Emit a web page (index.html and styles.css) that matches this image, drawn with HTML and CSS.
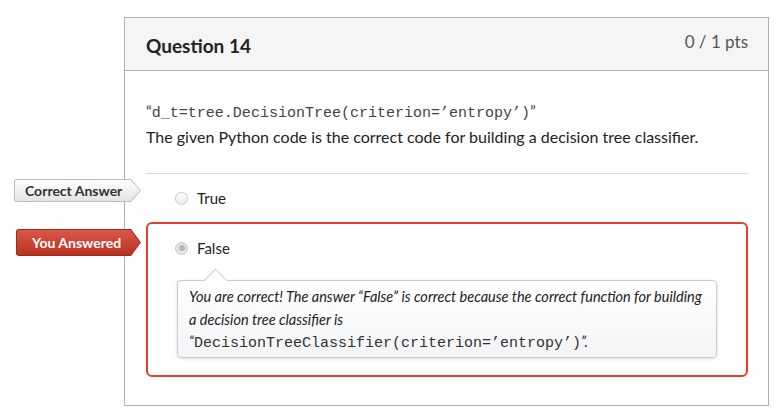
FILE: index.html
```html
<!DOCTYPE html>
<html>
<head>
<meta charset="utf-8">
<link rel="stylesheet" href="styles.css">
</head>
<body>
<div class="card">
  <div class="header">
    <h2 class="title">Question 14</h2>
    <div class="pts">0 / 1 pts</div>
  </div>
  <div class="body">
    <p class="code-line">“<code class="code-q">d_t=tree.DecisionTree(criterion=’entropy’)</code>”</p>
    <p class="desc">The given Python code is the correct code for building a decision tree classifier.</p>
    <div class="rule"></div>
    <div class="answer">
      <div class="label label-correct"><span class="label-in">Correct Answer</span></div>
      <div class="row"><span class="radio"></span><span class="opt">True</span></div>
    </div>
    <div class="answer answered">
      <div class="label label-you"><span class="label-in">You Answered</span></div>
      <div class="row"><span class="radio checked"></span><span class="opt">False</span></div>
      <div class="tip">
        You are correct! The answer “False” is correct because the correct function for building a decision tree classifier is “<code class="code-t">DecisionTreeClassifier(criterion=’entropy’)</code>”.
      </div>
    </div>
  </div>
</div>
</body>
</html>
```
FILE: styles.css
```css
html, body { margin: 0; padding: 0; background: #fff; }
body { font-family: Lato, "Open Sans", sans-serif; color: #222; }

.card {
  margin: 17px 0 0 124px;
  width: 645px;
  box-sizing: border-box;
  border: 1px solid #b0b0b0;
}
.header {
  height: 53px;
  box-sizing: border-box;
  background: #f5f5f5;
  border-bottom: 1px solid #b0b0b0;
  display: flex;
  justify-content: space-between;
  align-items: flex-start;
  padding: 0 20px 0 21px;
}
.title {
  margin: 0;
  padding-top: 17px;
  font-size: 19px;
  line-height: 22px;
  font-weight: 700;
  color: #222;
}
.pts {
  padding-top: 14px;
  font-size: 17px;
  line-height: 20px;
  color: #555;
}
.body { padding: 28px 20px 28px 21px; }
.code-line { margin: 0 0 2px; height: 24px; font-size: 16px; line-height: 24px; color: #444; }
.code-q { font-family: "Liberation Mono", "Courier New", monospace; font-size: 15px; line-height: 1; color: #444; }
.desc { margin: 0; height: 24px; font-size: 16px; line-height: 24px; color: #222; }
.rule { height: 1px; background: #dcdcdc; margin-top: 24px; }

.answer {
  position: relative;
  border: 2px solid transparent;
  border-radius: 6px;
  padding: 10px 0 10px 27px;
}
.answer.answered {
  border-color: #e5402a;
  padding: 12px 0 17px 27px;
}
.row { display: flex; align-items: center; height: 24px; font-size: 15px; color: #222; }
.radio {
  width: 11px; height: 11px;
  border-radius: 50%;
  border: 1px solid #c9c9c9;
  background: linear-gradient(#fdfdfd, #ececec);
  margin-right: 9px;
  position: relative;
}
.radio.checked { background: #e6e6e6; border-color: #c4c4c4; }
.radio.checked::after {
  content: "";
  position: absolute;
  left: 2.5px; top: 2.5px;
  width: 6px; height: 6px;
  border-radius: 50%;
  background: #b5b5b5;
}
.opt { font-size: 15px; }

.label {
  position: absolute;
  left: -134px;
  top: 3px;
  width: 127px;
  height: 23px;
  padding: 1px;
  box-sizing: border-box;
  background: #bdbdbd;
  border-radius: 3px 0 0 3px;
  clip-path: polygon(0 0, calc(100% - 10px) 0, 100% 50%, calc(100% - 10px) 100%, 0 100%);
}
.label-in {
  display: block;
  height: 100%;
  border-radius: 2px 0 0 2px;
  background: linear-gradient(#ffffff, #e4e4e4);
  clip-path: polygon(0 0, calc(100% - 9.5px) 0, 100% 50%, calc(100% - 9.5px) 100%, 0 100%);
  font-size: 14px;
  font-weight: 700;
  line-height: 21px;
  color: #333;
  padding-left: 10px;
}
.label-you {
  left: -132px;
  top: 5px;
  width: 125px;
  height: 27px;
  background: #a3271b;
}
.label-you .label-in {
  background: linear-gradient(#d9574a, #b8321f);
  color: #fff;
  line-height: 25px;
  padding-left: 15px;
}

.tip {
  position: relative;
  margin: 20px 0 0 2px;
  width: 540px;
  box-sizing: border-box;
  border: 1px solid #c9cdd2;
  border-radius: 4px;
  background: linear-gradient(#ffffff, #f3f4f6);
  box-shadow: 0 1px 3px rgba(0,0,0,0.15);
  padding: 5px 8px 3px 11px;
  font-style: italic;
  font-size: 14.5px;
  line-height: 22.5px;
  color: #222;
}
.tip::before {
  content: "";
  position: absolute;
  left: 29px;
  top: -9px;
  width: 16px; height: 16px;
  background: #fff;
  border-left: 1px solid #c9cdd2;
  border-top: 1px solid #c9cdd2;
  transform: rotate(45deg);
}
.code-t { font-family: "Liberation Mono", "Courier New", monospace; font-style: normal; font-size: 15px; line-height: 1; color: #333; }
```
